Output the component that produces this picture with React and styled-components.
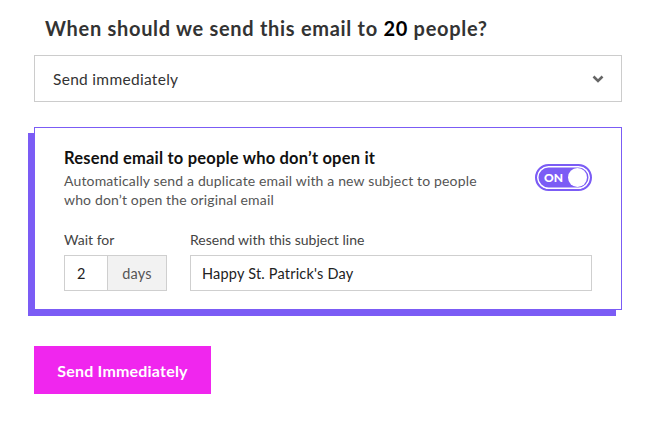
import React from "react";
import styled, { createGlobalStyle } from "styled-components";

const Global = createGlobalStyle`
  html, body { margin: 0; padding: 0; background: #fff; }
  body { font-family: "Lato", "Noto Sans", sans-serif; color: #333; }
  * { box-sizing: border-box; }
`;

const Page = styled.div`
  width: 660px;
  padding: 16px 38px 0 34px;
  display: flex;
  flex-direction: column;
`;

const Heading = styled.h2`
  margin: 0 0 0 11px;
  font-size: 20px;
  font-weight: 700;
  letter-spacing: 0.7px;
  color: #333;
  line-height: 24px;
`;

const Count = styled.span`
  color: #000;
`;

const Select = styled.div`
  margin-top: 15px;
  height: 47px;
  border: 1px solid #cccccc;
  display: flex;
  align-items: center;
  justify-content: space-between;
  padding: 0 17px 0 18px;
  font-size: 15.5px;
  letter-spacing: 0.3px;
  color: #333;
`;

const Card = styled.div`
  margin-top: 25px;
  border: 1px solid #7b5cf5;
  box-shadow: -6px 6px 0 #7b5cf5;
  padding: 20px 29px 18px 29px;
  display: flex;
  flex-direction: column;
`;

const CardHead = styled.div`
  display: flex;
  justify-content: space-between;
  align-items: flex-start;
`;

const Title = styled.div`
  font-size: 16.5px;
  font-weight: 700;
  letter-spacing: 0.2px;
  color: #111;
  line-height: 20px;
`;

const Desc = styled.div`
  margin-top: 3px;
  font-size: 14px;
  letter-spacing: 0.15px;
  color: #555;
  line-height: 19px;
  width: 430px;
`;

const Toggle = styled.div`
  margin-top: 16px;
  width: 57px;
  height: 27px;
  border-radius: 14px;
  background: #7b5cf5;
  border: 2px solid #7b5cf5;
  box-shadow: inset 0 0 0 1.5px #fff;
  display: flex;
  align-items: center;
  justify-content: space-between;
  padding: 0 3px 0 7px;
  color: #fff;
  font-size: 12px;
  font-weight: 900;
`;

const Knob = styled.span`
  width: 19px;
  height: 19px;
  border-radius: 50%;
  background: #fff;
`;

const Fields = styled.div`
  margin-top: 22px;
  display: flex;
  gap: 23px;
`;

const Field = styled.div`
  display: flex;
  flex-direction: column;
  gap: 6px;
  flex: ${(p) => (p.$grow ? 1 : "none")};
`;

const Label = styled.div`
  font-size: 14px;
  color: #444;
  line-height: 18px;
`;

const InputGroup = styled.div`
  display: flex;
  height: 36px;
  border: 1px solid #cfcfcf;
`;

const Box = styled.div`
  display: flex;
  align-items: center;
  padding: 0 ${(p) => p.$pad ?? 11}px;
  width: ${(p) => (p.$w ? p.$w + "px" : "auto")};
  flex: ${(p) => (p.$grow ? 1 : "none")};
  background: ${(p) => (p.$addon ? "#f2f2f2" : "#fff")};
  border-left: ${(p) => (p.$addon ? "1px solid #cfcfcf" : "none")};
  justify-content: ${(p) => (p.$center ? "center" : "flex-start")};
  font-size: 14.5px;
  letter-spacing: 0.2px;
  color: ${(p) => (p.$addon ? "#555" : "#222")};
`;

const Button = styled.button`
  margin-top: 36px;
  align-self: flex-start;
  width: 177px;
  height: 48px;
  border: none;
  background: #f026ee;
  color: #fff;
  font-family: inherit;
  font-size: 16px;
  letter-spacing: 0.2px;
  font-weight: 700;
`;

export default function App() {
  return (
    <>
      <Global />
      <Page>
        <Heading>
          When should we send this email to <Count>20</Count> people?
        </Heading>
        <Select>
          <span>Send immediately</span>
          <svg width="12" height="8" viewBox="0 0 12 8">
            <path d="M1.5 1.5 L6 6 L10.5 1.5" stroke="#666" strokeWidth="2.6" fill="none" />
          </svg>
        </Select>
        <Card>
          <CardHead>
            <div>
              <Title>Resend email to people who don’t open it</Title>
              <Desc>
                Automatically send a duplicate email with a new subject to people who don’t open the original email
              </Desc>
            </div>
            <Toggle>
              ON
              <Knob />
            </Toggle>
          </CardHead>
          <Fields>
            <Field>
              <Label>Wait for</Label>
              <InputGroup>
                <Box $w={42} $pad={12}>2</Box>
                <Box $w={59} $addon $center>days</Box>
              </InputGroup>
            </Field>
            <Field $grow>
              <Label>Resend with this subject line</Label>
              <InputGroup>
                <Box $grow>Happy St. Patrick's Day</Box>
              </InputGroup>
            </Field>
          </Fields>
        </Card>
        <Button>Send Immediately</Button>
      </Page>
    </>
  );
}
